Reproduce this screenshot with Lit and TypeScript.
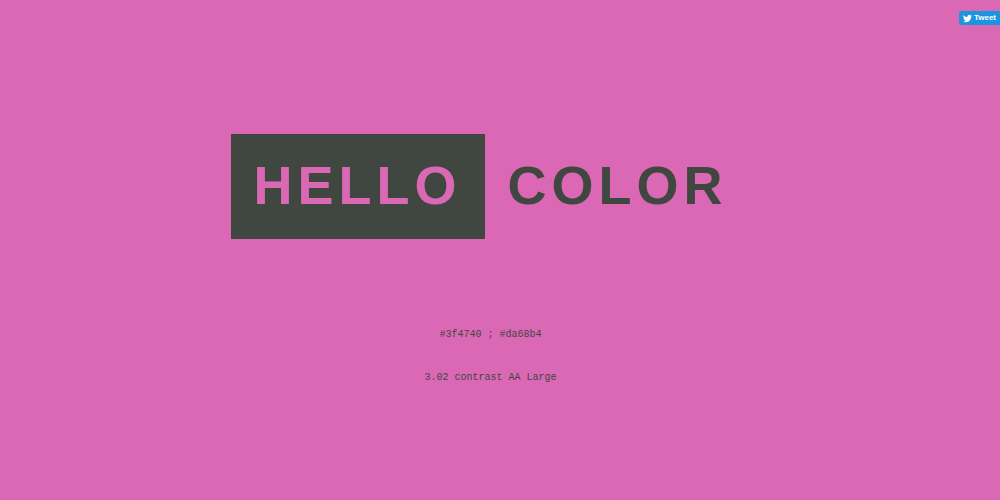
import { LitElement, html, css } from "lit";
import { customElement } from "lit/decorators.js";

@customElement("app-root")
class AppRoot extends LitElement {
  static styles = css`
    :host {
      display: block;
      box-sizing: border-box;
      min-height: 100vh;
      background: #da68b4;
      color: #3f4740;
    }
    .top {
      display: flex;
      justify-content: flex-end;
      padding-top: 11px;
    }
    .tweet {
      display: flex;
      align-items: center;
      gap: 2px;
      box-sizing: border-box;
      height: 14px;
      padding: 0 4px;
      border-radius: 2px 0 0 2px;
      background: #1b95e0;
      color: #fff;
      font: bold 8px/14px "Liberation Sans", Arial, sans-serif;
      text-decoration: none;
    }
    .bird {
      width: 9px;
      height: 9px;
    }
    main {
      display: flex;
      flex-direction: column;
      align-items: center;
      padding: 109px 19px 0 0;
    }
    h1 {
      display: flex;
      margin: 0;
      font: bold 54px/103px "Liberation Sans", Arial, sans-serif;
      letter-spacing: 5px;
    }
    .word {
      padding: 0 23px 2px;
    }
    .solid {
      background: #3f4740;
      color: #da68b4;
    }
    p {
      margin: 0 0 32px;
      font: 10px/11px "Liberation Mono", "Courier New", monospace;
    }
    .codes {
      margin-top: 90px;
    }
  `;

  render() {
    return html`
      <div class="top">
        <a class="tweet" href="#tweet">
          <svg class="bird" viewBox="0 0 24 24" fill="currentColor" aria-hidden="true">
            <path d="M23.95 4.57a10 10 0 0 1-2.82.77 4.96 4.96 0 0 0 2.16-2.72 9.9 9.9 0 0 1-3.12 1.19 4.92 4.92 0 0 0-8.39 4.48A13.95 13.95 0 0 1 1.64 3.16a4.92 4.92 0 0 0 1.52 6.57 4.9 4.9 0 0 1-2.23-.61v.06a4.92 4.92 0 0 0 3.95 4.83 5 5 0 0 1-2.21.08 4.94 4.94 0 0 0 4.6 3.42A9.87 9.87 0 0 1 0 19.54a14 14 0 0 0 7.55 2.21c9.05 0 14-7.5 14-13.98 0-.21 0-.42-.02-.63a9.94 9.94 0 0 0 2.42-2.57z"></path>
          </svg>
          <span>Tweet</span>
        </a>
      </div>
      <main>
        <h1><span class="word solid">HELLO</span><span class="word">COLOR</span></h1>
        <p class="codes">#3f4740 ; #da68b4</p>
        <p>3.02 contrast AA Large</p>
      </main>
    `;
  }
}
